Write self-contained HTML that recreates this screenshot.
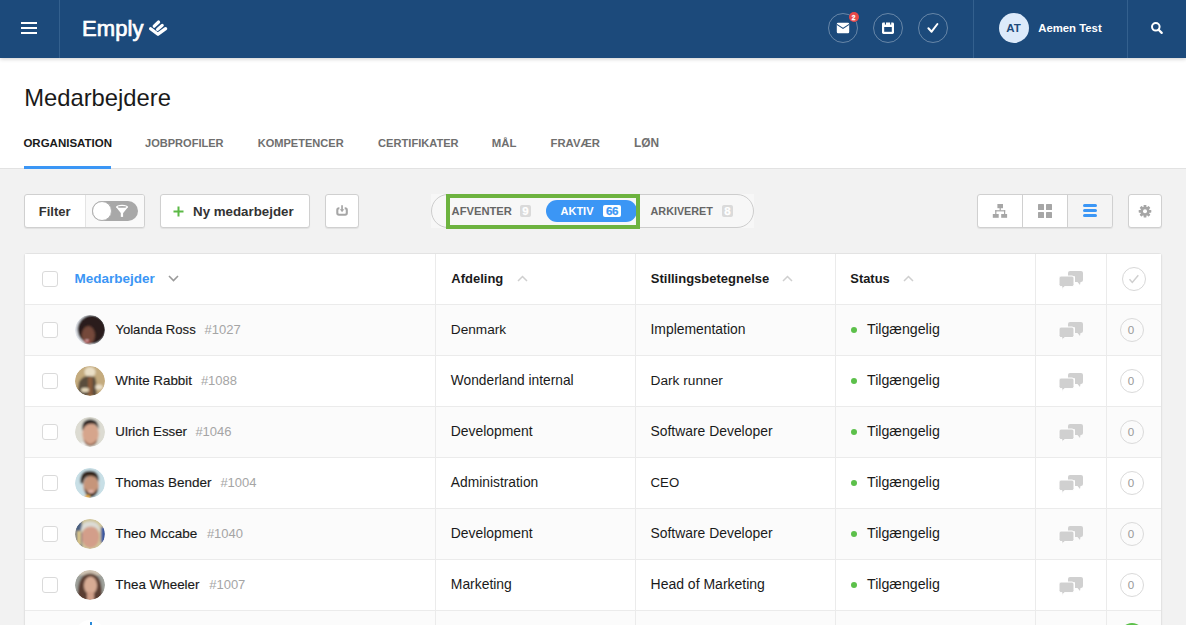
<!DOCTYPE html>
<html><head><meta charset="utf-8"><style>
*{box-sizing:border-box;margin:0;padding:0}
html,body{width:1186px;height:625px;overflow:hidden;background:#f2f2f2;font-family:"Liberation Sans",sans-serif;color:#1a1a1a}
.abs{position:absolute}
.t{position:absolute;line-height:1;white-space:nowrap}
#hdr{position:absolute;left:0;top:0;width:1186px;height:58px;background:#1c4a7b;box-shadow:0 1px 4px rgba(0,0,0,.2);z-index:5}
.vdiv{position:absolute;top:0;width:1px;height:58px;background:#33608e}
.hb{position:absolute;left:21px;width:16px;height:2px;background:#fff}
.hic{position:absolute;top:13px;width:30px;height:30px;border-radius:50%;border:1px solid rgba(255,255,255,.33)}
#top{position:absolute;left:0;top:58px;width:1186px;height:111px;background:#fff;border-bottom:1px solid #e2e2e2}
.btn{position:absolute;top:194px;height:34px;background:#fff;border:1px solid #d0d0d0;border-radius:3px;box-shadow:0 1px 1px rgba(0,0,0,.07)}
.tbl{position:absolute;left:24px;top:253px;width:1138px;height:420px;background:#fff;border:1px solid #e3e3e3;border-radius:3px;box-shadow:0 1px 2px rgba(0,0,0,.05)}
.row{position:absolute;left:25px;width:1136px;height:51px;border-bottom:1px solid #ebebeb}
.cb{position:absolute;left:42px;width:16px;height:16px;border:1px solid #dadada;border-radius:3px;background:#fff}
.vline{position:absolute;top:254px;width:1px;height:371px;background:#ebebeb}
.av{position:absolute;left:75px;width:30px;height:30px;border-radius:50%;overflow:hidden}
.dot{position:absolute;left:851px;width:6px;height:6px;border-radius:50%;background:#5cc04a}
.zero{position:absolute;left:1120px;width:24px;height:24px;border-radius:50%;border:1px solid #dadada}
.pz{position:absolute;text-align:center;border-radius:2px;font-weight:bold;line-height:12.5px;height:12px;font-family:'Liberation Sans';-webkit-text-stroke:0.25px currentColor}
</style></head><body>
<div id="hdr">
<div class="hb" style="top:22px"></div>
<div class="hb" style="top:27px"></div>
<div class="hb" style="top:32px"></div>
<div class="vdiv" style="left:59px"></div>
<div class="t" style="left:82.06px;top:18px;font-size:22px;font-weight:normal;color:#fff;-webkit-text-stroke:0.7px #fff;letter-spacing:0.1px">Emply</div>
<svg class="abs" style="left:145px;top:15px" width="26" height="26" viewBox="145 15 26 26">
<polyline points="150.6,28.7 158,34.2 165.6,28.7" fill="none" stroke="#fff" stroke-width="3.3" stroke-linecap="round" stroke-linejoin="round"/>
<line x1="154.2" y1="26.2" x2="158.6" y2="22" stroke="#fff" stroke-width="3.2" stroke-linecap="round"/>
<line x1="157.6" y1="29.4" x2="162.2" y2="25.4" stroke="#fff" stroke-width="3.2" stroke-linecap="round"/>
</svg>
<div class="hic" style="left:828px"></div>
<div class="hic" style="left:873px"></div>
<div class="hic" style="left:918px"></div>
<svg class="abs" style="left:836px;top:22px" width="14" height="12" viewBox="0 0 14 12">
<path d="M0.8 2Q0.8 0.8 2 0.8H12Q13.2 0.8 13.2 2V10Q13.2 11.2 12 11.2H2Q0.8 11.2 0.8 10Z" fill="#fff"/>
<path d="M0.8 2.4L7 6.4L13.2 2.4" fill="none" stroke="#1c4a7b" stroke-width="1.1"/>
</svg>
<div class="abs" style="left:849px;top:12px;width:10px;height:10px;border-radius:50%;background:#e94848"></div>
<div class="t" style="left:851.84px;top:15px;font-size:6.5px;font-weight:bold;color:#fff;-webkit-text-stroke:0.3px #fff">2</div>
<svg class="abs" style="left:881px;top:21px" width="14" height="14" viewBox="0 0 14 14">
<path d="M1 3Q1 1.6 2.4 1.6H11.6Q13 1.6 13 3V11.6Q13 13 11.6 13H2.4Q1 13 1 11.6Z" fill="#fff"/>
<rect x="3.2" y="6" width="7.6" height="4.8" fill="#1c4a7b"/>
<rect x="3.9" y="0.6" width="1.1" height="3" fill="#1c4a7b"/>
<rect x="9.1" y="0.6" width="1.1" height="3" fill="#1c4a7b"/>
</svg>
<svg class="abs" style="left:926px;top:22px" width="13" height="12" viewBox="0 0 13 12">
<path d="M2.4 6.3L5.6 9.7L11.4 2" fill="none" stroke="#fff" stroke-width="2" stroke-linecap="round" stroke-linejoin="round"/>
</svg>
<div class="vdiv" style="left:973px"></div>
<div class="abs" style="left:999px;top:13px;width:30px;height:30px;border-radius:50%;background:#dceafa"></div>
<div class="t" style="left:1006.20px;top:23px;font-size:11.5px;font-weight:bold;color:#1c4a7b;">AT</div>
<div class="t" style="left:1038.21px;top:23px;font-size:11.35px;font-weight:bold;color:#fff;">Aemen Test</div>
<div class="vdiv" style="left:1127px"></div>
<svg class="abs" style="left:1150px;top:22px" width="14" height="13" viewBox="0 0 14 13">
<circle cx="5.8" cy="4.8" r="3.8" fill="none" stroke="#fff" stroke-width="2"/>
<path d="M8.6 7.8L11.7 10.9" stroke="#fff" stroke-width="2.3" stroke-linecap="round"/>
</svg>
</div>
<div id="top"></div>
<div class="t" style="left:24.13px;top:86px;font-size:23.8px;font-weight:normal;color:#1a1a1a;">Medarbejdere</div>
<div class="t" style="left:23.39px;top:138px;font-size:11.5px;font-weight:bold;color:#1a1a1a;">ORGANISATION</div>
<div class="t" style="left:145.03px;top:138px;font-size:11.05px;font-weight:bold;color:#6f6f6f;">JOBPROFILER</div>
<div class="t" style="left:257.73px;top:138px;font-size:11.05px;font-weight:bold;color:#6f6f6f;">KOMPETENCER</div>
<div class="t" style="left:378.12px;top:138px;font-size:11.1px;font-weight:bold;color:#6f6f6f;">CERTIFIKATER</div>
<div class="t" style="left:491.70px;top:138px;font-size:11.4px;font-weight:bold;color:#6f6f6f;">MÅL</div>
<div class="t" style="left:550.51px;top:138px;font-size:11.3px;font-weight:bold;color:#6f6f6f;">FRAVÆR</div>
<div class="t" style="left:634.07px;top:138px;font-size:11.9px;font-weight:bold;color:#6f6f6f;">LØN</div>
<div class="abs" style="left:24px;top:166px;width:87px;height:3px;background:#3b96f5"></div>
<div class="btn" style="left:24px;width:121px;overflow:hidden">
<div class="abs" style="left:60px;top:0;width:60px;height:32px;background:#f9f9f9;border-left:1px solid #e4e4e4"></div>
<div class="abs" style="left:67px;top:6px;width:46px;height:20px;border-radius:10px;background:#a8a8a8"></div>
<div class="abs" style="left:67px;top:6px;width:20px;height:20px;border-radius:50%;background:#fff;border:1px solid #b0b0b0"></div>
</div>
<div class="t" style="left:38.79px;top:205px;font-size:13.0px;font-weight:bold;color:#333;">Filter</div>
<svg class="abs" style="left:114px;top:203px" width="16" height="15" viewBox="0 0 16 15">
<path d="M2 3.9L6.8 10H9.2L14.1 3.9Z" fill="#fff"/>
<rect x="6.8" y="9.5" width="2.3" height="4.4" fill="#fff"/>
<ellipse cx="8.05" cy="3.85" rx="6.05" ry="2.05" fill="#fff"/>
<ellipse cx="8.05" cy="3.9" rx="4.3" ry="0.85" fill="#a8a8a8"/>
</svg>
<div class="btn" style="left:160px;width:150px"></div>
<svg class="abs" style="left:173px;top:206px" width="11" height="11" viewBox="0 0 11 11"><path d="M5.5 0.5V10.5M0.5 5.5H10.5" stroke="#5cb946" stroke-width="2"/></svg>
<div class="t" style="left:193.07px;top:205px;font-size:13.3px;font-weight:bold;color:#333;">Ny medarbejder</div>
<div class="btn" style="left:325px;width:34px"></div>
<svg class="abs" style="left:335px;top:204px" width="14" height="14" viewBox="0 0 14 14">
<path d="M4.4 4.2H4Q2.3 4.2 2.3 5.9V9Q2.3 10.7 4 10.7H10.1Q11.8 10.7 11.8 9V5.9Q11.8 4.2 10.1 4.2H9.7" fill="none" stroke="#a6a6a6" stroke-width="2.1"/>
<path d="M7.05 1.2V6" stroke="#a6a6a6" stroke-width="1.7"/>
<path d="M4.8 5.2H9.3L7.05 8.3Z" fill="#a6a6a6"/>
</svg>
<div class="abs" style="left:431px;top:194px;width:323px;height:34px;background:#f7f7f7"></div>
<div class="abs" style="left:431px;top:194px;width:323px;height:34px;border:1px solid #cdcdcd;border-radius:17px"></div>
<div class="t" style="left:451.62px;top:206px;font-size:11.2px;font-weight:bold;color:#666;">AFVENTER</div>
<div class="pz" style="left:520px;top:205px;width:11px;background:#dadada;color:#fff;font-size:11.5px">9</div>
<div class="abs" style="left:546px;top:200px;width:90.5px;height:22px;border-radius:11px;background:#3b96f5"></div>
<div class="t" style="left:560.53px;top:206px;font-size:11.0px;font-weight:bold;color:#fff;">AKTIV</div>
<div class="pz" style="left:603px;top:205px;width:18px;background:#fff;color:#3b96f5;font-size:11.5px;letter-spacing:-0.3px">66</div>
<div class="t" style="left:650.54px;top:206px;font-size:10.8px;font-weight:bold;color:#666;">ARKIVERET</div>
<div class="pz" style="left:722px;top:205px;width:11px;background:#dadada;color:#fff;font-size:11.5px">8</div>
<div class="abs" style="left:446px;top:194px;width:194px;height:35px;border:4px solid #6db33f"></div>
<div class="btn" style="left:977px;width:136px;overflow:hidden">
<div class="abs" style="left:44px;top:0;width:1px;height:32px;background:#d0d0d0"></div>
<div class="abs" style="left:89px;top:0;width:1px;height:32px;background:#d0d0d0"></div>
<div class="abs" style="left:90px;top:0;width:45px;height:32px;background:#f4f4f4"></div>
</div>
<svg class="abs" style="left:992px;top:204px" width="16" height="14" viewBox="0 0 16 14">
<rect x="5.4" y="0" width="5.6" height="4.2" fill="#a6a6a6"/>
<rect x="7.6" y="4" width="1.2" height="2.6" fill="#a6a6a6"/>
<rect x="3.2" y="6.2" width="10" height="1.2" fill="#a6a6a6"/>
<rect x="3.2" y="6.2" width="1.2" height="4" fill="#a6a6a6"/>
<rect x="12" y="6.2" width="1.2" height="4" fill="#a6a6a6"/>
<rect x="0.8" y="10" width="5.9" height="3.8" fill="#a6a6a6"/>
<rect x="9.2" y="10" width="5.9" height="3.8" fill="#a6a6a6"/>
</svg>
<svg class="abs" style="left:1038px;top:204px" width="14" height="14" viewBox="0 0 14 14">
<rect x="0" y="0" width="6" height="6" rx=".5" fill="#a6a6a6"/><rect x="8" y="0" width="6" height="6" rx=".5" fill="#a6a6a6"/>
<rect x="0" y="8" width="6" height="6" rx=".5" fill="#a6a6a6"/><rect x="8" y="8" width="6" height="6" rx=".5" fill="#a6a6a6"/>
</svg>
<svg class="abs" style="left:1083px;top:204px" width="14" height="13" viewBox="0 0 14 13">
<rect x="0" y="0" width="14" height="3" rx="1.5" fill="#3b96f5"/>
<rect x="0" y="5" width="14" height="3" rx="1.5" fill="#3b96f5"/>
<rect x="0" y="10" width="14" height="3" rx="1.5" fill="#3b96f5"/>
</svg>
<div class="btn" style="left:1128px;width:34px"></div>
<svg class="abs" style="left:1138px;top:204px" width="14" height="14" viewBox="0 0 14 14">
<g fill="#a6a6a6" transform="translate(7 7.3)">
<rect x="-1.4" y="-6.3" width="2.8" height="12.6" rx="0.6"/>
<rect x="-1.4" y="-6.3" width="2.8" height="12.6" rx="0.6" transform="rotate(45)"/>
<rect x="-1.4" y="-6.3" width="2.8" height="12.6" rx="0.6" transform="rotate(90)"/>
<rect x="-1.4" y="-6.3" width="2.8" height="12.6" rx="0.6" transform="rotate(135)"/>
<circle r="4.6"/>
</g>
<circle cx="7" cy="7.3" r="2" fill="#fff"/>
</svg>
<div class="tbl"></div>
<div class="row" style="top:254px;height:51px;background:#fff"></div>
<div class="row" style="top:305px;background:#fbfbfb"></div>
<div class="row" style="top:356px;background:#fff"></div>
<div class="row" style="top:407px;background:#fbfbfb"></div>
<div class="row" style="top:458px;background:#fff"></div>
<div class="row" style="top:509px;background:#fbfbfb"></div>
<div class="row" style="top:560px;background:#fff"></div>
<div class="row" style="top:611px;background:#fbfbfb"></div>
<div class="vline" style="left:435px"></div>
<div class="vline" style="left:635px"></div>
<div class="vline" style="left:835px"></div>
<div class="vline" style="left:1035px"></div>
<div class="vline" style="left:1106px"></div>
<div class="cb" style="top:271px"></div>
<div class="t" style="left:74.46px;top:272px;font-size:13.5px;font-weight:bold;color:#3b96f5;">Medarbejder</div>
<svg class="abs" style="left:168px;top:275px" width="11" height="7" viewBox="0 0 11 7"><path d="M1 1L5.5 5.5L10 1" fill="none" stroke="#9a9a9a" stroke-width="1.6"/></svg>
<div class="t" style="left:451.29px;top:272px;font-size:13.0px;font-weight:bold;color:#1a1a1a;">Afdeling</div>
<svg class="abs" style="left:516.5px;top:274.5px" width="11" height="7" viewBox="0 0 11 7"><path d="M1 6L5.5 1.5L10 6" fill="none" stroke="#cfcfcf" stroke-width="1.5"/></svg>
<div class="t" style="left:650.79px;top:272px;font-size:13.0px;font-weight:bold;color:#1a1a1a;">Stillingsbetegnelse</div>
<svg class="abs" style="left:782px;top:274.5px" width="11" height="7" viewBox="0 0 11 7"><path d="M1 6L5.5 1.5L10 6" fill="none" stroke="#cfcfcf" stroke-width="1.5"/></svg>
<div class="t" style="left:850.30px;top:273px;font-size:12.9px;font-weight:bold;color:#1a1a1a;">Status</div>
<svg class="abs" style="left:903px;top:274.5px" width="11" height="7" viewBox="0 0 11 7"><path d="M1 6L5.5 1.5L10 6" fill="none" stroke="#cfcfcf" stroke-width="1.5"/></svg>
<svg class="abs" style="left:1058px;top:270px" width="26" height="21" viewBox="0 0 26 21"><path d="M10 3Q10 1 12 1H23Q25 1 25 3V10Q25 12 23 12H22.5L22 15L19.5 12H17V7Q17 6 16 6H10Z" fill="#d0d0d0"/><path d="M1 8Q1 6 3 6H14Q16 6 16 8V14.6Q16 16.6 14 16.6H6.5L4 19.6L4 16.6H3Q1 16.6 1 14.6Z" fill="#d0d0d0" stroke="#fff" stroke-width="1"/></svg>
<div class="abs" style="left:1122px;top:267px;width:24px;height:24px;border-radius:50%;border:1px solid #d8d8d8"></div>
<svg class="abs" style="left:1127px;top:273px" width="14" height="12" viewBox="0 0 14 12"><path d="M2.5 6.2L5.3 9.4L11.3 2.3" fill="none" stroke="#cfcfcf" stroke-width="1.5"/></svg>
<div class="cb" style="top:322px"></div>
<div class="av" style="top:315px"><svg width="30" height="30" viewBox="0 0 30 30"><defs><filter id="bl0" x="-20%" y="-20%" width="140%" height="140%"><feGaussianBlur stdDeviation="1.1"/></filter><clipPath id="cp0"><circle cx="15" cy="15" r="15"/></clipPath></defs><g clip-path="url(#cp0)"><g filter="url(#bl0)"><rect x="-3" y="-3" width="36" height="36" fill="#e4e8ee"/><ellipse cx="16.8" cy="14.5" rx="14.3" ry="14.5" fill="#2a1f1e"/><ellipse cx="13.3" cy="20.2" rx="6.6" ry="9.2" fill="#74483a"/><ellipse cx="12" cy="26" rx="2.8" ry="1.3" fill="#c8303a"/><ellipse cx="12" cy="25.3" rx="1.8" ry="0.6" fill="#eee"/></g></g></svg></div>
<div class="t" style="left:115.38px;top:323px;font-size:13.1px;font-weight:normal;color:#1a1a1a;-webkit-text-stroke:0.15px #1a1a1a">Yolanda Ross</div>
<div class="t" style="left:204.59px;top:323px;font-size:13.0px;font-weight:normal;color:#a5a5a5;">#1027</div>
<div class="t" style="left:450.84px;top:323px;font-size:13.65px;font-weight:normal;color:#1a1a1a;">Denmark</div>
<div class="t" style="left:650.53px;top:323px;font-size:13.9px;font-weight:normal;color:#1a1a1a;">Implementation</div>
<div class="dot" style="top:327px"></div>
<div class="t" style="left:867.01px;top:322px;font-size:14.2px;font-weight:normal;color:#1a1a1a;">Tilgængelig</div>
<svg class="abs" style="left:1058px;top:321px" width="26" height="21" viewBox="0 0 26 21"><path d="M10 3Q10 1 12 1H23Q25 1 25 3V10Q25 12 23 12H22.5L22 15L19.5 12H17V7Q17 6 16 6H10Z" fill="#d0d0d0"/><path d="M1 8Q1 6 3 6H14Q16 6 16 8V14.6Q16 16.6 14 16.6H6.5L4 19.6L4 16.6H3Q1 16.6 1 14.6Z" fill="#d0d0d0" stroke="#fff" stroke-width="1"/></svg>
<div class="zero" style="top:318px"></div>
<div class="t" style="left:1127.79px;top:324px;font-size:11.6px;font-weight:normal;color:#999;">0</div>
<div class="cb" style="top:373px"></div>
<div class="av" style="top:366px"><svg width="30" height="30" viewBox="0 0 30 30"><defs><filter id="bl1" x="-20%" y="-20%" width="140%" height="140%"><feGaussianBlur stdDeviation="1.1"/></filter><clipPath id="cp1"><circle cx="15" cy="15" r="15"/></clipPath></defs><g clip-path="url(#cp1)"><g filter="url(#bl1)"><rect x="-3" y="-3" width="36" height="36" fill="#c4ab7e"/><ellipse cx="15" cy="6" rx="5.5" ry="5" fill="#eadfc6"/><path d="M2 30 L4 16 Q8 9 14 10 L20 11 Q22 16 21 22 L22 30Z" fill="#5a4d3c"/><rect x="13" y="11" width="4.5" height="19" fill="#8a5c3a"/><ellipse cx="10" cy="24" rx="4" ry="2.2" fill="#e6d9bc"/><ellipse cx="24" cy="21" rx="3.8" ry="2.6" fill="#eadfc8"/></g></g></svg></div>
<div class="t" style="left:115.36px;top:374px;font-size:13.4px;font-weight:normal;color:#1a1a1a;-webkit-text-stroke:0.15px #1a1a1a">White Rabbit</div>
<div class="t" style="left:200.89px;top:374px;font-size:13.0px;font-weight:normal;color:#a5a5a5;">#1088</div>
<div class="t" style="left:450.84px;top:374px;font-size:13.75px;font-weight:normal;color:#1a1a1a;">Wonderland internal</div>
<div class="t" style="left:650.54px;top:374px;font-size:13.7px;font-weight:normal;color:#1a1a1a;">Dark runner</div>
<div class="dot" style="top:378px"></div>
<div class="t" style="left:867.01px;top:373px;font-size:14.2px;font-weight:normal;color:#1a1a1a;">Tilgængelig</div>
<svg class="abs" style="left:1058px;top:372px" width="26" height="21" viewBox="0 0 26 21"><path d="M10 3Q10 1 12 1H23Q25 1 25 3V10Q25 12 23 12H22.5L22 15L19.5 12H17V7Q17 6 16 6H10Z" fill="#d0d0d0"/><path d="M1 8Q1 6 3 6H14Q16 6 16 8V14.6Q16 16.6 14 16.6H6.5L4 19.6L4 16.6H3Q1 16.6 1 14.6Z" fill="#d0d0d0" stroke="#fff" stroke-width="1"/></svg>
<div class="zero" style="top:369px"></div>
<div class="t" style="left:1127.79px;top:375px;font-size:11.6px;font-weight:normal;color:#999;">0</div>
<div class="cb" style="top:424px"></div>
<div class="av" style="top:417px"><svg width="30" height="30" viewBox="0 0 30 30"><defs><filter id="bl2" x="-20%" y="-20%" width="140%" height="140%"><feGaussianBlur stdDeviation="1.1"/></filter><clipPath id="cp2"><circle cx="15" cy="15" r="15"/></clipPath></defs><g clip-path="url(#cp2)"><g filter="url(#bl2)"><rect x="-3" y="-3" width="36" height="36" fill="#dcdbd2"/><ellipse cx="15.5" cy="17" rx="8.2" ry="11" fill="#d6a58c"/><path d="M7 13 Q6.5 2 15.5 2.2 Q24 2.5 23.5 12 Q21 6 15.5 6.8 Q10 7 8 13Z" fill="#2b2420"/><path d="M8.5 22 Q15 32 22.5 22 Q22 28 15.5 29 Q9 28 8.5 22Z" fill="#8a5a42"/><path d="M3 27 L9 25 L12 31 L3 31Z" fill="#f4f4f4"/></g></g></svg></div>
<div class="t" style="left:115.37px;top:425px;font-size:13.3px;font-weight:normal;color:#1a1a1a;-webkit-text-stroke:0.15px #1a1a1a">Ulrich Esser</div>
<div class="t" style="left:195.39px;top:425px;font-size:13.0px;font-weight:normal;color:#a5a5a5;">#1046</div>
<div class="t" style="left:450.83px;top:425px;font-size:13.9px;font-weight:normal;color:#1a1a1a;">Development</div>
<div class="t" style="left:650.53px;top:425px;font-size:13.9px;font-weight:normal;color:#1a1a1a;">Software Developer</div>
<div class="dot" style="top:429px"></div>
<div class="t" style="left:867.01px;top:424px;font-size:14.2px;font-weight:normal;color:#1a1a1a;">Tilgængelig</div>
<svg class="abs" style="left:1058px;top:423px" width="26" height="21" viewBox="0 0 26 21"><path d="M10 3Q10 1 12 1H23Q25 1 25 3V10Q25 12 23 12H22.5L22 15L19.5 12H17V7Q17 6 16 6H10Z" fill="#d0d0d0"/><path d="M1 8Q1 6 3 6H14Q16 6 16 8V14.6Q16 16.6 14 16.6H6.5L4 19.6L4 16.6H3Q1 16.6 1 14.6Z" fill="#d0d0d0" stroke="#fff" stroke-width="1"/></svg>
<div class="zero" style="top:420px"></div>
<div class="t" style="left:1127.79px;top:426px;font-size:11.6px;font-weight:normal;color:#999;">0</div>
<div class="cb" style="top:475px"></div>
<div class="av" style="top:468px"><svg width="30" height="30" viewBox="0 0 30 30"><defs><filter id="bl3" x="-20%" y="-20%" width="140%" height="140%"><feGaussianBlur stdDeviation="1.1"/></filter><clipPath id="cp3"><circle cx="15" cy="15" r="15"/></clipPath></defs><g clip-path="url(#cp3)"><g filter="url(#bl3)"><rect x="-3" y="-3" width="36" height="36" fill="#c8dfe6"/><ellipse cx="16" cy="18" rx="7.8" ry="10.5" fill="#c6957a"/><path d="M5.5 15 Q4.5 2.5 15 2.8 Q25 3 23.5 14 Q21 7 15 8 Q9 8 8 16Z" fill="#35271f"/><path d="M9.5 20 Q16 31 23 20 Q23 28 16 29.5 Q10 28 9.5 20Z" fill="#3f2c22"/><ellipse cx="16" cy="23.5" rx="2.8" ry="1.4" fill="#e6b8b0"/><rect x="10" y="27" width="5" height="4" fill="#e8b04a"/></g></g></svg></div>
<div class="t" style="left:115.36px;top:476px;font-size:13.5px;font-weight:normal;color:#1a1a1a;-webkit-text-stroke:0.15px #1a1a1a">Thomas Bender</div>
<div class="t" style="left:220.39px;top:476px;font-size:13.0px;font-weight:normal;color:#a5a5a5;">#1004</div>
<div class="t" style="left:450.83px;top:476px;font-size:13.8px;font-weight:normal;color:#1a1a1a;">Administration</div>
<div class="t" style="left:650.58px;top:476px;font-size:13.2px;font-weight:normal;color:#1a1a1a;">CEO</div>
<div class="dot" style="top:480px"></div>
<div class="t" style="left:867.01px;top:475px;font-size:14.2px;font-weight:normal;color:#1a1a1a;">Tilgængelig</div>
<svg class="abs" style="left:1058px;top:474px" width="26" height="21" viewBox="0 0 26 21"><path d="M10 3Q10 1 12 1H23Q25 1 25 3V10Q25 12 23 12H22.5L22 15L19.5 12H17V7Q17 6 16 6H10Z" fill="#d0d0d0"/><path d="M1 8Q1 6 3 6H14Q16 6 16 8V14.6Q16 16.6 14 16.6H6.5L4 19.6L4 16.6H3Q1 16.6 1 14.6Z" fill="#d0d0d0" stroke="#fff" stroke-width="1"/></svg>
<div class="zero" style="top:471px"></div>
<div class="t" style="left:1127.79px;top:477px;font-size:11.6px;font-weight:normal;color:#999;">0</div>
<div class="cb" style="top:526px"></div>
<div class="av" style="top:519px"><svg width="30" height="30" viewBox="0 0 30 30"><defs><filter id="bl4" x="-20%" y="-20%" width="140%" height="140%"><feGaussianBlur stdDeviation="1.1"/></filter><clipPath id="cp4"><circle cx="15" cy="15" r="15"/></clipPath></defs><g clip-path="url(#cp4)"><g filter="url(#bl4)"><rect x="-3" y="-3" width="36" height="36" fill="#cfc49a"/><rect x="0" y="0" width="7" height="30" fill="#4a5e80"/><rect x="2" y="12" width="4" height="14" fill="#d8c58a"/><rect x="26" y="8" width="5" height="16" fill="#3a58a0"/><ellipse cx="15.5" cy="18" rx="8.8" ry="11" fill="#d39e8a"/><path d="M6 14 Q5 2 15.5 2.5 Q26 3 25 14 Q22 7 15.5 7.5 Q9 8 6 14Z" fill="#dcdcd6"/></g></g></svg></div>
<div class="t" style="left:115.36px;top:527px;font-size:13.5px;font-weight:normal;color:#1a1a1a;-webkit-text-stroke:0.15px #1a1a1a">Theo Mccabe</div>
<div class="t" style="left:206.89px;top:527px;font-size:13.0px;font-weight:normal;color:#a5a5a5;">#1040</div>
<div class="t" style="left:450.83px;top:527px;font-size:13.9px;font-weight:normal;color:#1a1a1a;">Development</div>
<div class="t" style="left:650.53px;top:527px;font-size:13.9px;font-weight:normal;color:#1a1a1a;">Software Developer</div>
<div class="dot" style="top:531px"></div>
<div class="t" style="left:867.01px;top:526px;font-size:14.2px;font-weight:normal;color:#1a1a1a;">Tilgængelig</div>
<svg class="abs" style="left:1058px;top:525px" width="26" height="21" viewBox="0 0 26 21"><path d="M10 3Q10 1 12 1H23Q25 1 25 3V10Q25 12 23 12H22.5L22 15L19.5 12H17V7Q17 6 16 6H10Z" fill="#d0d0d0"/><path d="M1 8Q1 6 3 6H14Q16 6 16 8V14.6Q16 16.6 14 16.6H6.5L4 19.6L4 16.6H3Q1 16.6 1 14.6Z" fill="#d0d0d0" stroke="#fff" stroke-width="1"/></svg>
<div class="zero" style="top:522px"></div>
<div class="t" style="left:1127.79px;top:528px;font-size:11.6px;font-weight:normal;color:#999;">0</div>
<div class="cb" style="top:577px"></div>
<div class="av" style="top:570px"><svg width="30" height="30" viewBox="0 0 30 30"><defs><filter id="bl5" x="-20%" y="-20%" width="140%" height="140%"><feGaussianBlur stdDeviation="1.1"/></filter><clipPath id="cp5"><circle cx="15" cy="15" r="15"/></clipPath></defs><g clip-path="url(#cp5)"><g filter="url(#bl5)"><rect x="-3" y="-3" width="36" height="36" fill="#9fa29c"/><rect x="-3" y="-3" width="36" height="8" fill="#cfc3b2"/><path d="M3 31 Q1 3 15.5 3.5 Q29 4 26.5 31Z" fill="#5a3c30"/><ellipse cx="15.5" cy="15.5" rx="6.6" ry="9" fill="#d8ac94"/><rect x="12" y="22" width="7" height="9" fill="#cf9e88"/></g></g></svg></div>
<div class="t" style="left:115.36px;top:578px;font-size:13.4px;font-weight:normal;color:#1a1a1a;-webkit-text-stroke:0.15px #1a1a1a">Thea Wheeler</div>
<div class="t" style="left:209.19px;top:578px;font-size:13.0px;font-weight:normal;color:#a5a5a5;">#1007</div>
<div class="t" style="left:450.83px;top:578px;font-size:13.9px;font-weight:normal;color:#1a1a1a;">Marketing</div>
<div class="t" style="left:650.52px;top:577px;font-size:14.0px;font-weight:normal;color:#1a1a1a;">Head of Marketing</div>
<div class="dot" style="top:582px"></div>
<div class="t" style="left:867.01px;top:577px;font-size:14.2px;font-weight:normal;color:#1a1a1a;">Tilgængelig</div>
<svg class="abs" style="left:1058px;top:576px" width="26" height="21" viewBox="0 0 26 21"><path d="M10 3Q10 1 12 1H23Q25 1 25 3V10Q25 12 23 12H22.5L22 15L19.5 12H17V7Q17 6 16 6H10Z" fill="#d0d0d0"/><path d="M1 8Q1 6 3 6H14Q16 6 16 8V14.6Q16 16.6 14 16.6H6.5L4 19.6L4 16.6H3Q1 16.6 1 14.6Z" fill="#d0d0d0" stroke="#fff" stroke-width="1"/></svg>
<div class="zero" style="top:573px"></div>
<div class="t" style="left:1127.79px;top:579px;font-size:11.6px;font-weight:normal;color:#999;">0</div>
<div class="abs" style="left:1120px;top:623px;width:24px;height:24px;border-radius:50%;background:#5cc04a"></div>
<div class="abs" style="left:75px;top:620px;width:30px;height:30px;border-radius:50%;background:#fff"></div>
<div class="abs" style="left:89.5px;top:622px;width:2px;height:6px;background:#2a8ad8"></div>
</body></html>
